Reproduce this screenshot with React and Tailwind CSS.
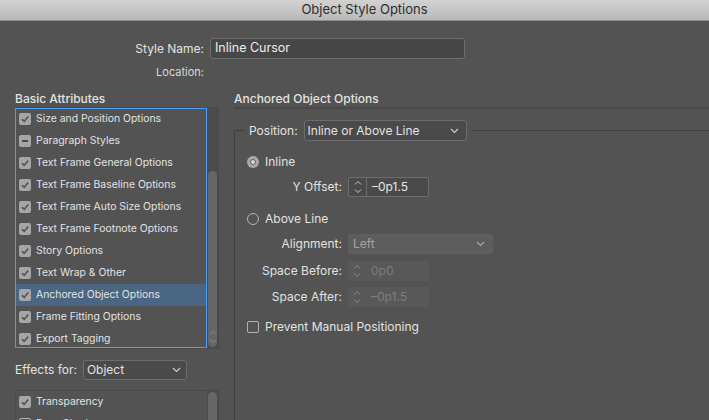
import React from 'react';

const font = { fontFamily: 'Inter, "Noto Sans", sans-serif' };

// small chevron used by the popup menus
function Chevron({ color = '#d0d0d0' }) {
  return (
    <svg width="9" height="6" viewBox="0 0 9 6" className="shrink-0">
      <polyline points="1,1 4.5,4.5 8,1" fill="none" stroke={color} strokeWidth="1.1" />
    </svg>
  );
}

function StepArrows({ color = '#c8c8c8' }) {
  return (
    <svg width="8" height="14" viewBox="0 0 8 14">
      <polyline points="1,4.5 4,1.5 7,4.5" fill="none" stroke={color} strokeWidth="1" />
      <polyline points="1,9.5 4,12.5 7,9.5" fill="none" stroke={color} strokeWidth="1" />
    </svg>
  );
}

function Check({ state = 'on' }) {
  if (state === 'off') {
    return <div className="w-[12px] h-[12px] rounded-[2px] border border-[#b4b4b4] shrink-0" />;
  }
  return (
    <div className="w-[12px] h-[12px] rounded-[2px] bg-[#a6a6a6] shrink-0 flex items-center justify-center">
      {state === 'mixed' ? (
        <div className="w-[6px] h-[2px] bg-[#4a4a4a]" />
      ) : (
        <svg width="10" height="10" viewBox="0 0 10 10">
          <polyline points="2,5.2 4.2,7.4 8.2,2.6" fill="none" stroke="#505050" strokeWidth="1.6" />
        </svg>
      )}
    </div>
  );
}

function Radio({ on }) {
  if (on) {
    return (
      <div className="w-[12px] h-[12px] rounded-full bg-[#a9a9a9] shrink-0 flex items-center justify-center">
        <div className="w-[6px] h-[6px] rounded-full bg-[#dcdcdc] border-[1.5px] border-[#5a5a5a]" />
      </div>
    );
  }
  return <div className="w-[12px] h-[12px] rounded-full border border-[#b4b4b4] shrink-0" />;
}

function Stepper({ value, disabled }) {
  return (
    <div
      className={
        'flex h-[20px] w-[81px] rounded-[2px] ' +
        (disabled ? 'bg-[#585858]' : 'border border-[#6c6c6c] bg-[#4a4a4a]')
      }>
      <div
        className={
          'w-[18px] flex items-center justify-center ' +
          (disabled ? '' : 'border-r border-[#6c6c6c]')
        }>
        <StepArrows color={disabled ? '#8c8c8c' : '#c8c8c8'} />
      </div>
      <div className={'flex items-center pl-[5px] text-[12px] ' + (disabled ? 'text-[#7e7e7e]' : 'text-[#e6e6e6]')}>
        {value}
      </div>
    </div>
  );
}

const attributes = [
  ['Size and Position Options', 'on'],
  ['Paragraph Styles', 'mixed'],
  ['Text Frame General Options', 'on'],
  ['Text Frame Baseline Options', 'on'],
  ['Text Frame Auto Size Options', 'on'],
  ['Text Frame Footnote Options', 'on'],
  ['Story Options', 'on'],
  ['Text Wrap & Other', 'on'],
  ['Anchored Object Options', 'on'],
  ['Frame Fitting Options', 'on'],
  ['Export Tagging', 'on'],
];

export default function App() {
  return (
    <div className="w-[709px] h-[420px] overflow-hidden bg-[#535353] text-[#e2e2e2] flex flex-col" style={font}>
      {/* title bar */}
      <div className="h-[21px] shrink-0 bg-gradient-to-b from-[#d2d2d2] to-[#b9b9b9] border-b border-[#8c8c8c] flex items-center justify-center pl-[20px] text-[13px] text-[#2e2e2e]">
        Object Style Options
      </div>

      {/* style name */}
      <div className="mt-[17px] flex items-center h-[21px]">
        <div className="w-[204px] text-right text-[12px]">Style Name:</div>
        <div className="ml-[6px] w-[255px] h-[21px] rounded-[3px] border border-[#6e6e6e] bg-[#474747] flex items-center pl-[4px] text-[12.5px] text-[#ececec]">
          Inline Cursor
        </div>
      </div>
      <div className="mt-[6px] h-[14px] flex items-center">
        <div className="w-[204px] text-right text-[11px] text-[#d8d8d8]">Location:</div>
      </div>

      <div className="flex mt-[12px] flex-1 min-h-0">
        {/* left column */}
        <div className="w-[219px] pl-[15px] shrink-0 flex flex-col">
          <div className="h-[16px] flex items-center text-[12px] font-medium">Basic Attributes</div>
          <div className="h-[242px] flex border border-[#4a4a4a] border-l-0">
            <div className="w-[192px] border border-[#4a9ff0] overflow-hidden">
              <div className="-mt-[1px]">
                {attributes.map(([label, state]) => (
                  <div
                    key={label}
                    className={
                      'h-[22px] flex items-center pl-[3px] gap-[5px] text-[10.4px] ' +
                      (label === 'Anchored Object Options' ? 'bg-[#4b6683]' : '')
                    }>
                    <Check state={state} />
                    <span>{label}</span>
                  </div>
                ))}
              </div>
            </div>
            <div className="flex-1 bg-[#4c4c4c] flex flex-col pt-[63px] pb-[1px] px-[1px]">
              <div className="flex-1 rounded-full bg-[#666666] flex flex-col items-center justify-end pb-[3px]">
                <StepArrows color="#8a8a8a" />
              </div>
            </div>
          </div>

          <div className="mt-[11px] h-[20px] flex items-center">
            <span className="text-[12px]">Effects for:</span>
            <div className="ml-[6px] w-[104px] h-[20px] rounded-[3px] border border-[#6c6c6c] bg-[#4a4a4a] flex items-center justify-between pl-[3px] pr-[5px] text-[12px]">
              <span>Object</span>
              <Chevron />
            </div>
          </div>

          <div className="mt-[10px] h-[60px] flex border border-[#4a4a4a]">
            <div className="flex-1 flex flex-col">
              <div className="h-[22px] flex items-center pl-[3px] gap-[5px] text-[10.4px]">
                <Check state="on" />
                <span>Transparency</span>
              </div>
              <div className="h-[22px] flex items-center pl-[3px] gap-[5px] text-[10.4px]">
                <Check state="off" />
                <span>Drop Shadow</span>
              </div>
            </div>
            <div className="w-[11px] bg-[#4c4c4c] p-[1px]">
              <div className="h-full rounded-full bg-[#666666]" />
            </div>
          </div>
        </div>

        {/* right column */}
        <div className="flex-1 ml-[15px] flex flex-col">
          <div className="h-[16px] flex items-center text-[12px] font-medium">Anchored Object Options</div>
          <div className="h-[2px] bg-[#484848]" />

          <div className="mt-[21px] flex-1 border-l border-t border-[#404040]">
            <div className="-mt-[11px] ml-[10px] flex">
              <div className="bg-[#535353] px-[4px] flex items-center h-[21px]">
                <span className="text-[12px]">Position:</span>
                <div className="ml-[6px] w-[163px] h-[21px] rounded-[3px] border border-[#6c6c6c] bg-[#4a4a4a] flex items-center justify-between pl-[3px] pr-[7px] text-[12px]">
                  <span>Inline or Above Line</span>
                  <Chevron />
                </div>
              </div>
            </div>

            <div className="pl-[12px] mt-[10px] h-[21px] flex items-center gap-[6px] text-[12px]">
              <Radio on />
              <span>Inline</span>
            </div>
            <div className="mt-[5px] flex items-center h-[20px]">
              <div className="w-[107px] text-right text-[12px]">Y Offset:</div>
              <div className="ml-[6px]">
                <Stepper value="–0p1.5" />
              </div>
            </div>

            <div className="pl-[12px] mt-[11px] h-[21px] flex items-center gap-[6px] text-[12px]">
              <Radio />
              <span>Above Line</span>
            </div>
            <div className="mt-[5px] flex items-center h-[20px]">
              <div className="w-[107px] text-right text-[12px]">Alignment:</div>
              <div className="ml-[6px] w-[145px] h-[20px] rounded-[3px] bg-[#5d5d5d] flex items-center justify-between pl-[5px] pr-[8px] text-[12px] text-[#a3a3a3]">
                <span>Left</span>
                <Chevron color="#a8a8a8" />
              </div>
            </div>
            <div className="mt-[6px] flex items-center h-[21px]">
              <div className="w-[107px] text-right text-[12px]">Space Before:</div>
              <div className="ml-[6px]">
                <Stepper value="0p0" disabled />
              </div>
            </div>
            <div className="mt-[5px] flex items-center h-[21px]">
              <div className="w-[107px] text-right text-[12px]">Space After:</div>
              <div className="ml-[6px]">
                <Stepper value="–0p1.5" disabled />
              </div>
            </div>

            <div className="pl-[12px] mt-[9px] h-[21px] flex items-center gap-[6px] text-[12px]">
              <Check state="off" />
              <span>Prevent Manual Positioning</span>
            </div>
          </div>
        </div>
      </div>
    </div>
  );
}
